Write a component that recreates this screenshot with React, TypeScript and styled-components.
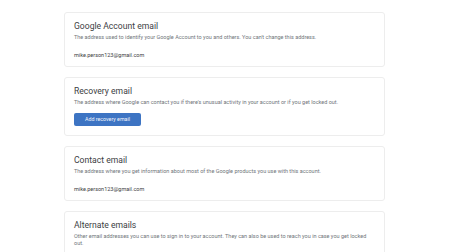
import React from 'react'
import styled, { createGlobalStyle } from 'styled-components'

const GlobalStyle = createGlobalStyle`
	html,
	body {
		margin: 0;
		padding: 0;
		background: #ffffff;
	}

	body {
		font-family: Roboto, 'Liberation Sans', Arial, sans-serif;
		-webkit-font-smoothing: antialiased;
	}
`

const Page = styled.main`
	width: 450px;
	height: 252px;
	overflow: hidden;
	box-sizing: border-box;
	padding: 12px 65px 0 64px;
	display: flex;
	flex-direction: column;
	gap: 10px;
`

const Card = styled.section`
	box-sizing: border-box;
	background: #ffffff;
	border: 1px solid #ededed;
	border-radius: 3px;
	padding: 7px 10px 7px 9px;
`

const Title = styled.h2`
	margin: 0;
	font-size: 8.6px;
	line-height: 12px;
	font-weight: 400;
	color: #3c4043;
`

const Description = styled.p`
	margin: 2px 0 0;
	font-size: 5.5px;
	line-height: 7.3px;
	color: #70757a;
	padding-right: 4px;
`

const Email = styled.div`
	margin-top: 10px;
	font-size: 5.5px;
	line-height: 8px;
	font-weight: 400;
	color: #3c4043;
`

const Button = styled.button`
	display: block;
	margin-top: 6px;
	margin-bottom: 2px;
	height: 13px;
	width: 67px;
	padding: 0;
	border: none;
	border-radius: 2px;
	background: #3d74c3;
	color: #f2f6fc;
	font-family: inherit;
	font-size: 5.3px;
	font-weight: 400;
	cursor: pointer;
`

type Section = {
	title: string
	description: string
	email?: string
	action?: string
}

const sections: Section[] = [
	{
		title: 'Google Account email',
		description:
			"The address used to identify your Google Account to you and others. You can't change this address.",
		email: 'mike.person123@gmail.com'
	},
	{
		title: 'Recovery email',
		description:
			"The address where Google can contact you if there's unusual activity in your account or if you get locked out.",
		action: 'Add recovery email'
	},
	{
		title: 'Contact email',
		description:
			'The address where you get information about most of the Google products you use with this account.',
		email: 'mike.person123@gmail.com'
	},
	{
		title: 'Alternate emails',
		description:
			'Other email addresses you can use to sign in to your account. They can also be used to reach you in case you get locked out.'
	}
]

const App = () => {
	return (
		<>
			<GlobalStyle />
			<Page>
				{sections.map(({ title, description, email, action }) => (
					<Card key={title}>
						<Title>{title}</Title>
						<Description>{description}</Description>
						{email && <Email>{email}</Email>}
						{action && <Button>{action}</Button>}
					</Card>
				))}
			</Page>
		</>
	)
}

export default App
